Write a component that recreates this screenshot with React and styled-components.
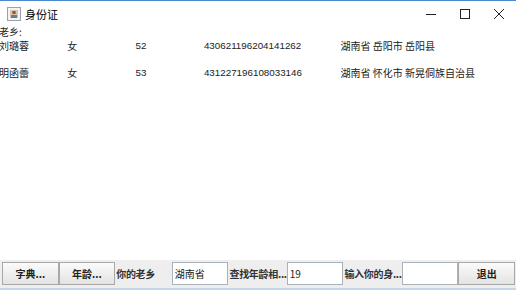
import styled, { createGlobalStyle } from 'styled-components';

const GlobalStyle = createGlobalStyle`
    html, body {
        margin: 0;
        padding: 0;
        background: #ffffff;
    }
    * {
        box-sizing: border-box;
    }
`;

const people = [
    { name: '刘璐蓉', sex: '女', age: '52', id: '430621196204141262', addr: '湖南省 岳阳市 岳阳县' },
    { name: '明函蕾', sex: '女', age: '53', id: '431227196108033146', addr: '湖南省 怀化市 新晃侗族自治县' },
];

const App = () => {
    return (
        <>
            <GlobalStyle />
            <Frame>
                <TitleBar>
                    <TitleLeft>
                        <AppIcon viewBox="0 0 14 14">
                            <rect x="0.5" y="0.5" width="13" height="13" fill="#f4f4f4" stroke="#9aa3ad" />
                            <rect x="3" y="3" width="8" height="8" fill="#d9c2b0" />
                            <circle cx="7" cy="5.5" r="1.8" fill="#8a5a3c" />
                            <rect x="4" y="8" width="6" height="3" fill="#6b7b8c" />
                        </AppIcon>
                        <TitleText>身份证</TitleText>
                    </TitleLeft>
                    <Controls>
                        <Control>
                            <svg width="10" height="10" viewBox="0 0 10 10">
                                <path d="M0 5.5h10" stroke="#222" strokeWidth="1" />
                            </svg>
                        </Control>
                        <Control>
                            <svg width="10" height="10" viewBox="0 0 10 10">
                                <rect x="0.5" y="0.5" width="9" height="9" fill="none" stroke="#222" />
                            </svg>
                        </Control>
                        <Control>
                            <svg width="10" height="10" viewBox="0 0 10 10">
                                <path d="M0 0L10 10M10 0L0 10" stroke="#222" strokeWidth="1" />
                            </svg>
                        </Control>
                    </Controls>
                </TitleBar>

                <Content>
                    <Heading>老乡:</Heading>
                    {people.map((p) => (
                        <Row key={p.id}>
                            <Cell>{p.name}</Cell>
                            <Cell>{p.sex}</Cell>
                            <Cell $num>{p.age}</Cell>
                            <Cell $span={2} $num>{p.id}</Cell>
                            <Cell $span={3}>{p.addr}</Cell>
                        </Row>
                    ))}
                </Content>

                <BottomBar>
                    <Button>字典...</Button>
                    <Button>年龄...</Button>
                    <Label>你的老乡</Label>
                    <Field defaultValue="湖南省" />
                    <Label>查找年龄相...</Label>
                    <Field defaultValue="19" />
                    <Label>输入你的身...</Label>
                    <Field defaultValue="" />
                    <Button>退出</Button>
                </BottomBar>
            </Frame>
        </>
    );
};

export default App;

const Frame = styled.div`
    width: 516px;
    height: 290px;
    display: flex;
    flex-direction: column;
    background: #ffffff;
    border-top: 1px solid #4a8ad0;
    overflow: hidden;
    font-family: "Noto Sans CJK SC", "Liberation Sans", sans-serif;
`;

const TitleBar = styled.div`
    height: 26px;
    display: flex;
    align-items: center;
    justify-content: space-between;
    background: #ffffff;
`;

const TitleLeft = styled.div`
    display: flex;
    align-items: center;
    padding-left: 7px;
`;

const AppIcon = styled.svg`
    width: 14px;
    height: 14px;
    margin-right: 4px;
`;

const TitleText = styled.div`
    font-size: 11px;
    color: #000;
`;

const Controls = styled.div`
    display: flex;
    align-items: center;
    height: 100%;
`;

const Control = styled.div`
    width: 34px;
    height: 100%;
    display: flex;
    align-items: center;
    justify-content: center;
`;

const Content = styled.div`
    flex: 1;
    display: flex;
    flex-direction: column;
    font-size: 10px;
    color: #222;
`;

const Heading = styled.div`
    height: 10px;
    line-height: 10px;
    margin-left: -1px;
`;

const Row = styled.div`
    display: grid;
    grid-template-columns: repeat(8, 68.3px);
    height: 27px;
    padding-top: 4px;
    line-height: 10px;
    align-items: start;
`;

const Cell = styled.div`
    grid-column: span ${(p) => p.$span || 1};
    white-space: nowrap;
    font-family: ${(p) => (p.$num ? '"Liberation Sans", sans-serif' : 'inherit')};
    font-size: ${(p) => (p.$num ? '9.8px' : '10px')};
    margin-left: -1px;
`;

const BottomBar = styled.div`
    height: 30px;
    display: grid;
    grid-template-columns: repeat(9, 1fr);
    align-items: center;
    padding: 0 1px 2px 2px;
    background: #eeeeee;
    border-bottom: 2px solid #c5d6e8;
`;

const Button = styled.button`
    height: 23px;
    margin: 0;
    padding: 0;
    font-family: inherit;
    font-size: 10px;
    font-weight: 700;
    color: #222;
    border: 1px solid #a8a8a8;
    border-radius: 0;
    background: linear-gradient(#fbfbfb, #e3e3e3);
    overflow: hidden;
    white-space: nowrap;
`;

const Label = styled.div`
    font-size: 10px;
    font-weight: 700;
    letter-spacing: -0.3px;
    color: #333;
    white-space: nowrap;
    padding-left: 1px;
`;

const Field = styled.input`
    height: 23px;
    width: 100%;
    margin: 0;
    padding: 0 2px;
    font-family: inherit;
    font-size: 10px;
    color: #222;
    border: 1px solid #aab3bc;
    background: #ffffff;
    outline: none;
`;
